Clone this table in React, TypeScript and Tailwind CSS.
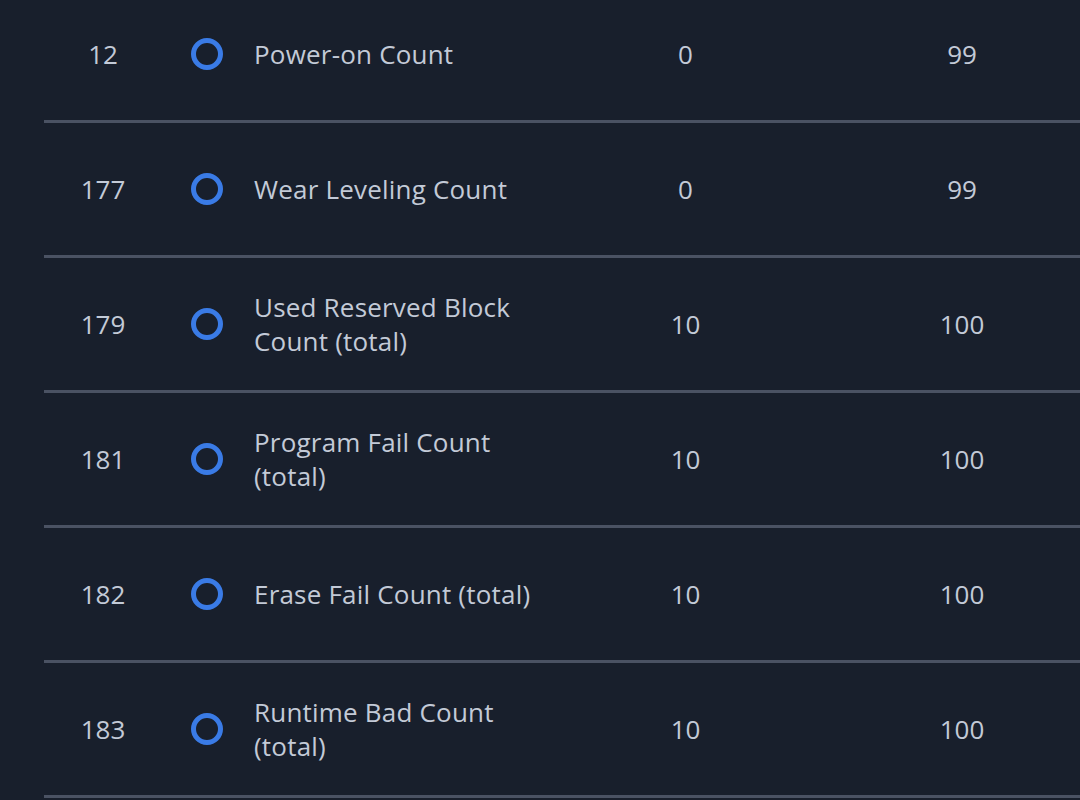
const rows = [
  { id: "12", name: "Power-on Count", value: "0", worst: "99" },
  { id: "177", name: "Wear Leveling Count", value: "0", worst: "99" },
  { id: "179", name: "Used Reserved Block Count (total)", value: "10", worst: "100" },
  { id: "181", name: "Program Fail Count (total)", value: "10", worst: "100" },
  { id: "182", name: "Erase Fail Count (total)", value: "10", worst: "100" },
  { id: "183", name: "Runtime Bad Count (total)", value: "10", worst: "100" },
]

function StatusRing() {
  return (
    <svg width="34" height="34" viewBox="0 0 34 34">
      <circle cx="17" cy="17" r="13.5" fill="none" stroke="#3a7be6" strokeWidth="5" />
    </svg>
  )
}

export default function App() {
  return (
    <div className="w-[1080px] h-[800px] overflow-hidden bg-[#181f2c] text-[#c3cad7] font-['Open_Sans',sans-serif]">
      <div className="-mt-[12px] pl-[44px]">
        {rows.map((r) => (
          <div key={r.id} className="flex items-center h-[135px] border-b-[3px] border-[#4a5263] text-[26px] leading-[34px]">
            <div className="w-[118px] shrink-0 text-center">{r.id}</div>
            <div className="w-[90px] shrink-0 flex justify-center">
              <StatusRing />
            </div>
            <div className="w-[300px] shrink-0 ml-[2px] tracking-[0.2px]">{r.name}</div>
            <div className="w-[263px] shrink-0 text-center">{r.value}</div>
            <div className="w-[290px] shrink-0 text-center">{r.worst}</div>
          </div>
        ))}
      </div>
    </div>
  )
}
